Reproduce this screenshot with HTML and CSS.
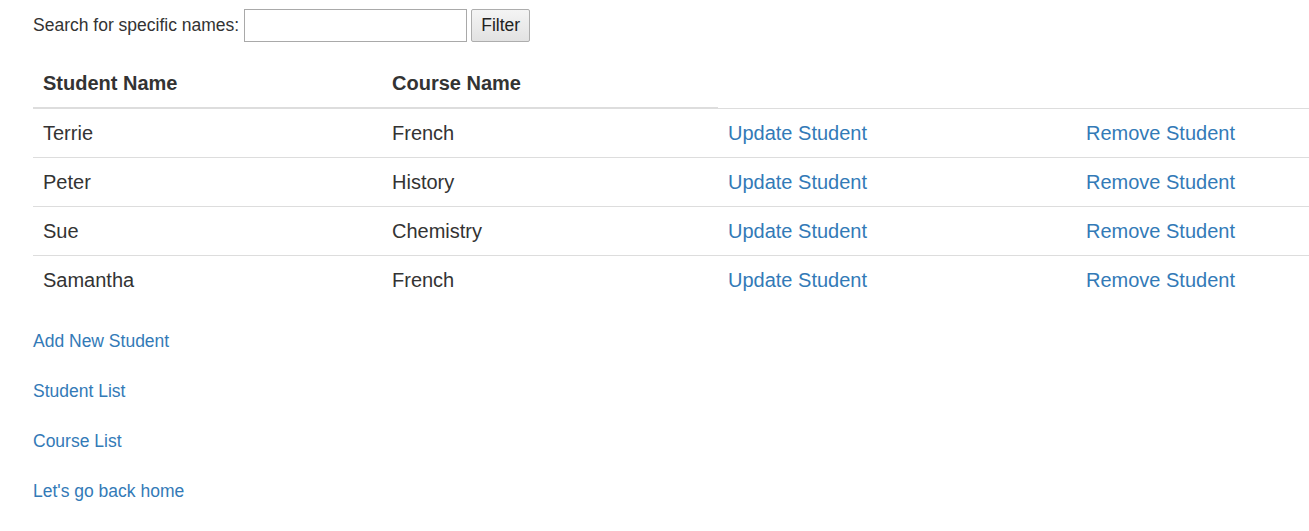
FILE: index.html
```html
<!DOCTYPE html>
<html>
<head>
<meta charset="utf-8">
<title>Students</title>
<link rel="stylesheet" href="styles.css">
</head>
<body>
<div class="page">
  <form class="search">
    <label class="search-label" for="q">Search for specific names:</label>
    <input class="search-input" id="q" type="text">
    <button class="search-btn" type="button">Filter</button>
  </form>
  <table class="students">
    <colgroup>
      <col class="c1"><col class="c2"><col class="c3"><col class="c4">
    </colgroup>
    <thead>
      <tr><th>Student Name</th><th>Course Name</th></tr>
    </thead>
    <tbody>
      <tr><td>Terrie</td><td>French</td><td><a href="#">Update Student</a></td><td><a href="#">Remove Student</a></td></tr>
      <tr><td>Peter</td><td>History</td><td><a href="#">Update Student</a></td><td><a href="#">Remove Student</a></td></tr>
      <tr><td>Sue</td><td>Chemistry</td><td><a href="#">Update Student</a></td><td><a href="#">Remove Student</a></td></tr>
      <tr><td>Samantha</td><td>French</td><td><a href="#">Update Student</a></td><td><a href="#">Remove Student</a></td></tr>
    </tbody>
  </table>
  <nav class="links">
    <a href="#">Add New Student</a>
    <a href="#">Student List</a>
    <a href="#">Course List</a>
    <a href="#">Let's go back home</a>
  </nav>
</div>
</body>
</html>
```
FILE: styles.css
```css
html, body {
  margin: 0;
  padding: 0;
  background: #fff;
}
body {
  font-family: "Liberation Sans", Arial, sans-serif;
  font-size: 17.5px;
  color: #333;
}
a {
  color: #337ab7;
  text-decoration: none;
}
.page {
  padding-left: 33px;
  padding-top: 9px;
}
.search {
  display: flex;
  align-items: center;
  margin: 0;
  height: 33px;
}
.search-label {
  font-size: 17.5px;
  line-height: 25px;
  margin-right: 5px;
}
.search-input {
  box-sizing: border-box;
  width: 223px;
  height: 33px;
  border: 1px solid #a9a9a9;
  margin: 0 4px 0 0;
  padding: 2px 4px;
  font: inherit;
}
.search-btn {
  box-sizing: border-box;
  height: 33px;
  width: 59px;
  margin: 0;
  padding: 0;
  font-family: "Liberation Sans", Arial, sans-serif;
  font-size: 17.5px;
  color: #222;
  border: 1px solid #adadad;
  border-radius: 2px;
  background: linear-gradient(#f4f4f4, #e2e2e2);
}
.students {
  margin-top: 18px;
  margin-bottom: 25px;
  width: 1276px;
  table-layout: fixed;
  border-collapse: collapse;
  border-spacing: 0;
  font-size: 20px;
}
.c1 { width: 349px; }
.c2 { width: 336px; }
.c3 { width: 358px; }
.c4 { width: 233px; }
.students th {
  text-align: left;
  font-weight: bold;
  padding: 10px;
  line-height: 27px;
  border-bottom: 2px solid #ddd;
}
.students td {
  padding: 10px;
  line-height: 28px;
  border-top: 1px solid #ddd;
  white-space: nowrap;
}
.links {
  display: flex;
  flex-direction: column;
  align-items: flex-start;
  gap: 25px;
  font-size: 17.5px;
  line-height: 25px;
}
```
